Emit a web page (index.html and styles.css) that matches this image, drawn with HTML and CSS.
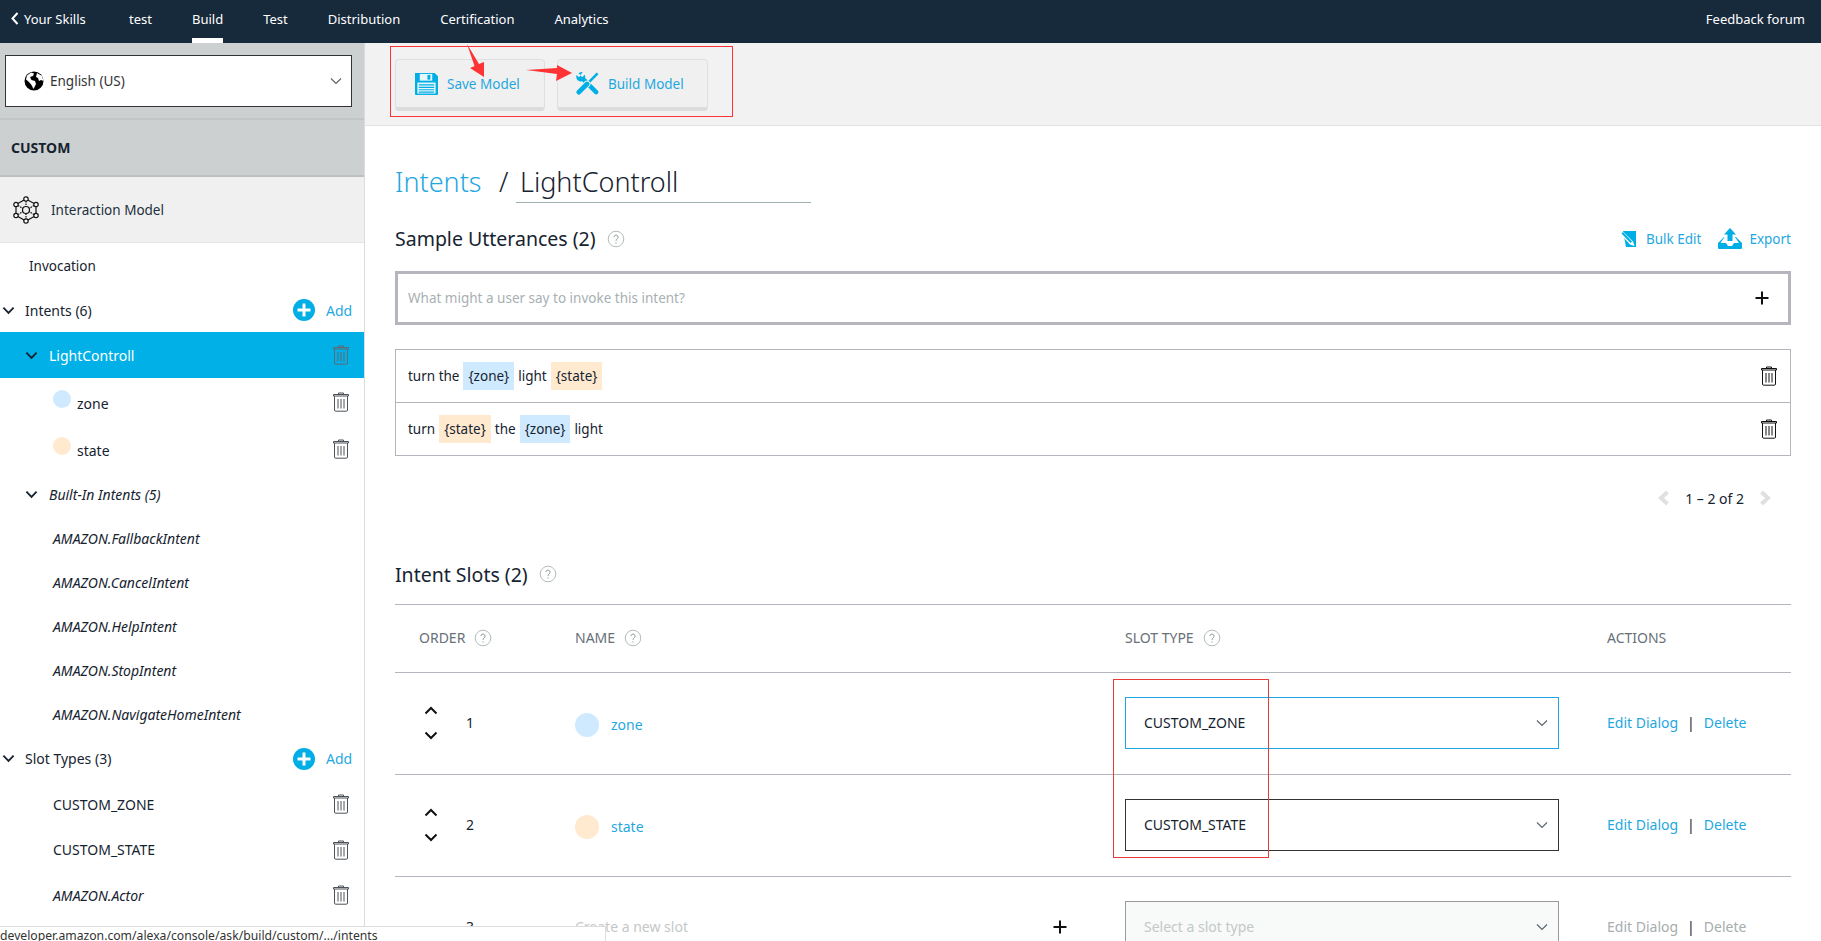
FILE: index.html
```html
<!DOCTYPE html>
<html lang="en">
<head>
<meta charset="utf-8">
<title>Build - LightControll</title>
<link rel="stylesheet" href="styles.css">
</head>
<body>
<svg class="defs" width="0" height="0" aria-hidden="true">
  <symbol id="trash" viewBox="0 0 16 20">
    <path d="M5.500 2.500V1h5v1.500M.5 2.500h15v1.500H.5z" fill="none" stroke="currentColor" stroke-width="1"/>
    <path d="M1.500 4v14a1.200 1.200 0 0 0 1.200 1.200h10.600a1.200 1.200 0 0 0 1.200-1.200V4" fill="none" stroke="currentColor" stroke-width="1"/>
    <path d="M5 7v9.500M8 7v9.500M11 7v9.500" stroke="currentColor" stroke-width="1"/>
  </symbol>
  <symbol id="plus-c" viewBox="0 0 22 22">
    <circle cx="11" cy="11" r="11" fill="#00aee6"/>
    <path d="M11 4.500v13M4.500 11h13" stroke="#fff" stroke-width="3"/>
  </symbol>
  <symbol id="help" viewBox="0 0 18 18">
    <circle cx="9" cy="9" r="7.800" fill="none" stroke="#b4bcbc" stroke-width="1"/>
    <path d="M6.900 7a2.100 2.100 0 1 1 3.300 1.900c-.8.5-1.200.9-1.200 2M9 12.400v1.200" fill="none" stroke="#8f9a9a" stroke-width="1"/>
  </symbol>
  <symbol id="chev-d" viewBox="0 0 14 9">
    <path d="M1.500 1.500 7 7l5.500-5.500" fill="none" stroke="currentColor" stroke-width="2"/>
  </symbol>
  <symbol id="chev-thin" viewBox="0 0 12 8">
    <path d="M1 1.500 6 6.500l5-5" fill="none" stroke="currentColor" stroke-width="1.200"/>
  </symbol>
</svg>

<header class="topbar">
  <a class="back"><svg class="back-ic" viewBox="0 0 8 13"><path d="M6.500 1 1.500 6.500l5 5.500" fill="none" stroke="#fff" stroke-width="2"/></svg>Your Skills</a>
  <nav class="tabs">
    <a class="tab">test</a>
    <a class="tab tab-on">Build</a>
    <a class="tab">Test</a>
    <a class="tab">Distribution</a>
    <a class="tab">Certification</a>
    <a class="tab">Analytics</a>
  </nav>
  <a class="forum">Feedback forum</a>
</header>

<div class="shell">
  <aside class="side">
    <div class="locale">
      <div class="locale-box">
        <svg class="globe" viewBox="0 0 20 20"><circle cx="10" cy="10" r="9.500" fill="#000"/><path d="M3 4.500 7 1.500l3 1-1 2.500-3 1 1.500 3L11 10l1 3-2.500 5-2-4-2.500-3-3-2.500zM13 2l5 3 1.500 5-2.500-1-2 1-1-3-2-1z" fill="#fff"/></svg>
        <span class="locale-text">English (US)</span>
        <svg class="chev-t"><use href="#chev-thin"/></svg>
      </div>
    </div>
    <div class="custom">CUSTOM</div>
    <div class="model">
      <svg class="net" viewBox="0 0 26 28" fill="none" stroke="#111" stroke-width="1.200"><path d="M13 3 23 8.500v11L13 25 3 19.500v-11z"/><circle cx="13" cy="14" r="3.500"/><circle cx="13" cy="3" r="2.200" fill="#fff"/><circle cx="23" cy="8.500" r="2.200" fill="#fff"/><circle cx="23" cy="19.500" r="2.200" fill="#fff"/><circle cx="13" cy="25" r="2.200" fill="#fff"/><circle cx="3" cy="19.500" r="2.200" fill="#fff"/><circle cx="3" cy="8.500" r="2.200" fill="#fff"/><path d="M13 5v5.500M13 17.500V23M21 9.600 16 12.500M5 18.400l5-2.900M5 9.600l5 2.900M21 18.400l-5-2.900" stroke-dasharray="1.500 1"/></svg>
      <span>Interaction Model</span>
    </div>
    <div class="row h45 pl29 small">Invocation</div>
    <div class="row h44 pl5">
      <svg class="chev"><use href="#chev-d"/></svg><span class="grow">Intents (6)</span>
      <svg class="plus"><use href="#plus-c"/></svg><a class="add">Add</a>
    </div>
    <div class="row h46 pl25 selected">
      <svg class="chev"><use href="#chev-d"/></svg><span class="grow">LightControll</span>
      <svg class="trash"><use href="#trash"/></svg>
    </div>
    <div class="row h47 pl53 slot-row">
      <i class="dot dot-blue"></i><span class="grow">zone</span>
      <svg class="trash"><use href="#trash"/></svg>
    </div>
    <div class="row h47 pl53 slot-row">
      <i class="dot dot-orange"></i><span class="grow">state</span>
      <svg class="trash"><use href="#trash"/></svg>
    </div>
    <div class="row h44 pl25 ital">
      <svg class="chev"><use href="#chev-d"/></svg><span>Built-In Intents (5)</span>
    </div>
    <div class="row h44 pl53 ital">AMAZON.FallbackIntent</div>
    <div class="row h44 pl53 ital">AMAZON.CancelIntent</div>
    <div class="row h44 pl53 ital">AMAZON.HelpIntent</div>
    <div class="row h44 pl53 ital">AMAZON.StopIntent</div>
    <div class="row h44 pl53 ital">AMAZON.NavigateHomeIntent</div>
    <div class="row h45 pl5">
      <svg class="chev"><use href="#chev-d"/></svg><span class="grow">Slot Types (3)</span>
      <svg class="plus"><use href="#plus-c"/></svg><a class="add">Add</a>
    </div>
    <div class="row h46 pl53"><span class="grow">CUSTOM_ZONE</span><svg class="trash"><use href="#trash"/></svg></div>
    <div class="row h45 pl53"><span class="grow">CUSTOM_STATE</span><svg class="trash"><use href="#trash"/></svg></div>
    <div class="row h46 pl53 ital"><span class="grow">AMAZON.Actor</span><svg class="trash"><use href="#trash"/></svg></div>
  </aside>

  <main class="main">
    <div class="toolbar">
      <button class="tbtn tbtn-save">
        <svg class="tbtn-ic" viewBox="0 0 24 24"><path d="M0 1h20.500L24 4.500V23a1 1 0 0 1-1 1H1a1 1 0 0 1-1-1z" fill="#00aee6"/><path d="M5 2h13v7H5z" fill="#e8f7fc"/><path d="M13 3h3v5h-3z" fill="#00aee6"/><path d="M2.500 11h19v11.500h-19z" fill="#e8f7fc"/><path d="M4 13.500h16M4 16h16M4 18.500h16M4 21h16" stroke="#00aee6" stroke-width="1.200"/></svg>
        Save Model
      </button>
      <button class="tbtn tbtn-build">
        <svg class="tbtn-ic" viewBox="0 0 24 24">
          <path d="M8 8 21 21" stroke="#00aee6" stroke-width="4.600" stroke-linecap="round"/>
          <path d="M5.500 0 7 .3 4.500 3.200l1.800 2.200 3-2.600c1 3.200-.6 7-4.400 7C1.500 9.800-.6 6.500.6 3l2.500 2.500L5 3.500 2.500 1.200z" fill="#00aee6"/>
          <path d="m22.500 1.500-9.500 9.500" stroke="#f0f0f0" stroke-width="4.500"/>
          <path d="m22.500 1.500-9.500 9.500" stroke="#00aee6" stroke-width="2.600"/>
          <path d="m11.500 12.500-8.500 8.500" stroke="#f0f0f0" stroke-width="7" stroke-linecap="round"/>
          <path d="m11.500 12.500-8.500 8.500" stroke="#00aee6" stroke-width="5" stroke-linecap="round"/>
        </svg>
        Build Model
      </button>
    </div>

    <section class="content">
      <div class="crumb">
        <a class="crumb-link">Intents</a><span class="crumb-sep">/</span><span class="crumb-name">LightControll</span>
      </div>

      <div class="sec-head">
        <h2 class="sec-title">Sample Utterances (2)</h2>
        <svg class="help"><use href="#help"/></svg>
        <span class="grow"></span>
        <a class="tool">
          <svg class="ic-bulk" viewBox="0 0 16 16"><path d="M3 0h13v16H6z" fill="#00aee6"/><path d="M0 2.500 2.500 0 13 10.500l1.500 4.500-4.500-1.500z" fill="#fff"/><path d="M1.500 2.500 3 1l9 9.500-1.500 1.500z" fill="#00aee6"/></svg>
          Bulk Edit
        </a>
        <a class="tool tool-exp">
          <svg class="ic-export" viewBox="0 0 24 21"><path d="M12 0l6 6.500h-3.500V13h-5V6.500H6z" fill="#00aee6"/><path d="M6 9 0 15v5a1 1 0 0 0 1 1h22a1 1 0 0 0 1-1v-5l-6-6h-1l4 6h-5l-2 3H10l-2-3H2.500l4-6z" fill="#00aee6"/></svg>
          Export
        </a>
      </div>

      <div class="utter-input">
        <span class="grow">What might a user say to invoke this intent?</span>
        <svg class="ic-plus" viewBox="0 0 14 14"><path d="M7 .5v13M.5 7h13" stroke="#111" stroke-width="2"/></svg>
      </div>

      <div class="utter-list">
        <div class="utter">
          <span>turn the</span><span class="tag tag-b">{zone}</span><span>light</span><span class="tag tag-o">{state}</span>
          <span class="grow"></span><svg class="trash trash-dark"><use href="#trash"/></svg>
        </div>
        <div class="utter">
          <span>turn</span><span class="tag tag-o">{state}</span><span>the</span><span class="tag tag-b">{zone}</span><span>light</span>
          <span class="grow"></span><svg class="trash trash-dark"><use href="#trash"/></svg>
        </div>
      </div>

      <div class="pager">
        <svg class="pg" viewBox="0 0 12 16"><path d="M9.500 2 3 8l6.500 6" fill="none" stroke="#e0e0e0" stroke-width="4"/></svg>
        <span>1 – 2 of 2</span>
        <svg class="pg" viewBox="0 0 12 16"><path d="M2.500 2 9 8l-6.500 6" fill="none" stroke="#e0e0e0" stroke-width="4"/></svg>
      </div>

      <div class="slots-head">
        <h2 class="sec-title">Intent Slots (2)</h2>
        <svg class="help"><use href="#help"/></svg>
      </div>

      <div class="table">
        <div class="tr thead">
          <div class="td td-order">ORDER<svg class="help"><use href="#help"/></svg></div>
          <div class="td">NAME<svg class="help"><use href="#help"/></svg></div>
          <div class="td">SLOT TYPE<svg class="help"><use href="#help"/></svg></div>
          <div class="td">ACTIONS</div>
        </div>
        <div class="tr">
          <div class="td td-order">
            <span class="updown"><svg class="arrow up"><use href="#chev-d"/></svg><svg class="arrow"><use href="#chev-d"/></svg></span>1
          </div>
          <div class="td td-name"><i class="dot-lg dot-blue"></i><a class="link">zone</a></div>
          <div class="td"><div class="sel sel-focus"><span class="grow">CUSTOM_ZONE</span><svg class="chev-t"><use href="#chev-thin"/></svg></div></div>
          <div class="td"><a class="link">Edit Dialog</a><span class="bar">|</span><a class="link">Delete</a></div>
        </div>
        <div class="tr">
          <div class="td td-order">
            <span class="updown"><svg class="arrow up"><use href="#chev-d"/></svg><svg class="arrow"><use href="#chev-d"/></svg></span>2
          </div>
          <div class="td td-name"><i class="dot-lg dot-orange"></i><a class="link">state</a></div>
          <div class="td"><div class="sel"><span class="grow">CUSTOM_STATE</span><svg class="chev-t"><use href="#chev-thin"/></svg></div></div>
          <div class="td"><a class="link">Edit Dialog</a><span class="bar">|</span><a class="link">Delete</a></div>
        </div>
        <div class="tr">
          <div class="td td-order"><span class="updown"></span>3</div>
          <div class="td td-new"><span class="grow muted">Create a new slot</span><svg class="ic-plus" viewBox="0 0 14 14"><path d="M7 .5v13M.5 7h13" stroke="#111" stroke-width="2"/></svg></div>
          <div class="td"><div class="sel sel-off"><span class="grow">Select a slot type</span><svg class="chev-t"><use href="#chev-thin"/></svg></div></div>
          <div class="td muted-actions"><a>Edit Dialog</a><span class="bar">|</span><a>Delete</a></div>
        </div>
      </div>
    </section>
  </main>
</div>

<div class="status">developer.amazon.com/alexa/console/ask/build/custom/.../intents</div>

<div class="mark mark-top"></div>
<div class="mark mark-slot"></div>
<svg class="arrows" viewBox="0 0 1821 941" aria-hidden="true">
  <polygon points="467,44 479,64 484,62 484,77 470,68 474.500,66" fill="#ff3333"/>
  <polygon points="526,70 557,68 557,65 572,73 556,81 557,74" fill="#ff3333"/>
</svg>
</body>
</html>
```
FILE: styles.css
```css
* { box-sizing: border-box; }
html, body { margin: 0; height: 941px; overflow: hidden; }
body { position: relative; font-family: "Noto Sans", "Open Sans", sans-serif; font-size: 14px; color: #16232f; background: #fff; }
.defs { position: absolute; }
.grow { flex: 1; }
a { cursor: pointer; }

.topbar { height: 43px; background: #172a3c; color: #fff; display: flex; align-items: stretch; font-size: 13px; }
.back { display: flex; align-items: center; padding: 0 0 6px 11px; width: 129px; }
.back-ic { width: 8px; height: 13px; margin-right: 5px; }
.tabs { display: flex; gap: 40px; flex: 1; }
.tab { display: flex; align-items: center; border-bottom: 5px solid transparent; height: 43px; }
.tab-on { border-bottom-color: #fff; }
.forum { display: flex; align-items: center; padding: 0 16px 5px 0; }

.shell { display: flex; height: 898px; }
.side { width: 365px; flex: none; border-right: 1px solid #dcdcdc; }
.locale { height: 77px; background: #ccd0d1; padding: 12px 12px 0 5px; border-bottom: 2px solid #c2c6c7; }
.locale-box { height: 52px; width: 347px; background: #fff; border: 1px solid #333; display: flex; align-items: center; padding: 0 9px 0 18px; font-size: 13.500px; }
.globe { width: 20px; height: 20px; margin-right: 6px; }
.locale-text { flex: 1; color: #333; }
.chev-t { width: 12px; height: 8px; color: #5b6770; flex: none; }
.custom { height: 57px; background: #ccd0d1; border-bottom: 2px solid #bcc0c1; display: flex; align-items: center; padding-left: 11px; font-size: 14px; font-weight: 700; }
.model { height: 66px; background: #f0f0f0; border-bottom: 1px solid #e4e4e4; display: flex; align-items: center; padding-left: 13px; gap: 12px; color: #232f3e; font-size: 13.500px; }
.net { width: 26px; height: 28px; }

.row { display: flex; align-items: center; padding-right: 11px; font-size: 14px; color: #16232f; }
.small { font-size: 13.500px; }
.h44 { height: 44px; } .h45 { height: 45px; } .h46 { height: 46px; } .h47 { height: 47px; }
.pl5 { padding-left: 2px; } .pl25 { padding-left: 25px; } .pl29 { padding-left: 29px; } .pl53 { padding-left: 53px; }
.ital { font-style: italic; }
.chev { width: 13px; height: 9px; margin-right: 10px; color: #16232f; flex: none; }
.pl25 .chev { margin-right: 11px; }
.selected { background: #00b0e6; color: #fff; }
.selected .chev { color: #16232f; }
.selected .trash { color: #5c6b75; }
.slot-row { padding-top: 4px; }
.slot-row .trash { transform: translateY(-2px); }
.trash { width: 16px; height: 20px; color: #4b5259; flex: none; margin-right: 4px; }
.trash-dark { color: #111; margin-right: 0; }
.plus { width: 22px; height: 22px; flex: none; margin-right: 11px; }
.add { color: #1fa8e0; font-size: 14px; width: 26px; margin-right: 1px; }
.dot { width: 18px; height: 18px; border-radius: 50%; display: block; margin-right: 6px; transform: translateY(-5px); flex: none; }
.dot-blue { background: #cfeaff; }
.dot-orange { background: #ffead0; }

.main { flex: 1; min-width: 0; }
.toolbar { height: 83px; background: #f2f2f2; border-bottom: 1px solid #e2e2e2; padding: 16px 0 0 30px; display: flex; align-items: flex-start; gap: 12px; }
.tbtn { height: 52px; background: #f0f0f0; border: 1px solid #dfdfdf; border-bottom: 4px solid #dcdcdc; border-radius: 4px; color: #1fa8e0; font: inherit; font-size: 13.500px; display: flex; align-items: center; padding: 0 0 0 19px; gap: 9px; }
.tbtn-save { width: 150px; }
.tbtn-build { width: 151px; padding-left: 18px; gap: 9px; }
.tbtn-ic { width: 23px; height: 23px; flex: none; }

.content { padding: 0 30px; }
.crumb { display: flex; align-items: flex-end; height: 77px; font-size: 27px; font-weight: 300; line-height: 38px; }
.crumb-link { color: #1fa8e0; width: 104px; margin-bottom: 2px; }
.crumb-sep { width: 17px; color: #16232f; margin-bottom: 2px; }
.crumb-name { width: 295px; border-bottom: 1px solid #9fb0b3; padding: 0 0 1px 4px; }
.sec-head { display: flex; align-items: center; height: 37px; margin-top: 17px; }
.sec-title { margin: 0; font-size: 19.500px; font-weight: 400; color: #16232f; }
.help { width: 18px; height: 18px; margin-left: 11px; flex: none; }
.tool { display: flex; align-items: center; color: #1fa8e0; font-size: 13.500px; }
.tool-exp { margin-left: 17px; }
.ic-bulk { width: 16px; height: 16px; margin-right: 10px; }
.ic-export { width: 24px; height: 21px; margin-right: 7px; }
.utter-input { height: 54px; margin-top: 14px; border: 3px solid #b5b5bd; display: flex; align-items: center; padding: 0 19px 0 10px; color: #a8b0b3; font-size: 13.500px; }
.ic-plus { width: 14px; height: 14px; flex: none; }
.utter-list { margin-top: 24px; border: 1px solid #b5b5bd; }
.utter { height: 52px; display: flex; align-items: center; padding: 0 13px 0 12px; gap: 4px; font-size: 13.500px; }
.utter + .utter { height: 53px; border-top: 1px solid #b5b5bd; }
.tag { height: 28px; padding: 0 5px; display: flex; align-items: center; }
.tag-b { background: #cfeaff; }
.tag-o { background: #ffead0; }
.pager { display: flex; justify-content: flex-end; align-items: center; gap: 15px; margin-top: 28px; height: 28px; padding-right: 20px; font-size: 14px; }
.pg { width: 12px; height: 16px; }
.slots-head { display: flex; align-items: center; margin-top: 44px; height: 36px; }
.table { margin-top: 12px; border-top: 1px solid #b5b5bd; }
.tr { display: grid; grid-template-columns: 180px 550px 482px 184px; height: 102px; padding-bottom: 2px; border-bottom: 1px solid #b5b5bd; align-items: center; }
.thead { height: 68px; color: #687078; font-size: 14px; }
.td { display: flex; align-items: center; min-width: 0; }
.thead .help { margin-left: 9px; }
.td-order { padding-left: 24px; }
.td-name { padding-top: 4px; }
.updown { display: flex; flex-direction: column; gap: 16px; width: 43px; padding-left: 5px; margin-right: 4px; flex: none; }
.arrow { width: 14px; height: 9px; color: #111; flex: none; }
.arrow.up { transform: rotate(180deg); }
.dot-lg { width: 24px; height: 24px; border-radius: 50%; margin-right: 12px; flex: none; }
.link { color: #1fa8e0; }
.sel { width: 434px; height: 52px; border: 1px solid #333; display: flex; align-items: center; padding: 0 10px 0 18px; font-size: 14px; }
.sel-focus { border-color: #1fa8e0; }
.sel-off { border-color: #9a9a9a; background: #f8f9f9; color: #c4c8c8; }
.bar { margin: 0 9px; color: #16232f; }
.td-new { padding-right: 58px; }
.muted { color: #c4c8c8; }
.muted-actions { color: #a8adad; }

.status { position: absolute; left: 0; bottom: 0; width: 606px; height: 15px; background: #fff; border-top: 1px solid #dcdcdc; border-right: 1px solid #dcdcdc; font-size: 12.200px; line-height: 15px; color: #333; white-space: nowrap; overflow: hidden; padding-top: 1px; }

.mark { position: absolute; border: 1px solid #ff3333; pointer-events: none; }
.mark-top { left: 390px; top: 46px; width: 343px; height: 71px; }
.mark-slot { left: 1113px; top: 679px; width: 156px; height: 179px; border-color: #e83a3a; }
.arrows { position: absolute; left: 0; top: 0; width: 1821px; height: 941px; pointer-events: none; }
```
